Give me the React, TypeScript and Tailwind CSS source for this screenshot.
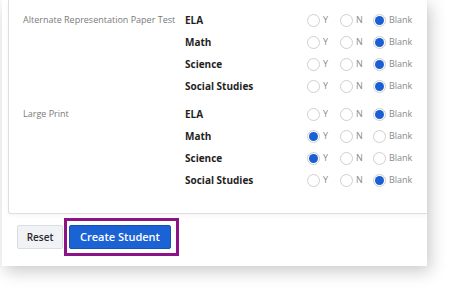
import React from 'react';

type Choice = 'Y' | 'N' | 'Blank';

const groups: { label: string; rows: { subject: string; value: Choice }[] }[] = [
  {
    label: 'Alternate Representation Paper Test',
    rows: [
      { subject: 'ELA', value: 'Blank' },
      { subject: 'Math', value: 'Blank' },
      { subject: 'Science', value: 'Blank' },
      { subject: 'Social Studies', value: 'Blank' },
    ],
  },
  {
    label: 'Large Print',
    rows: [
      { subject: 'ELA', value: 'Blank' },
      { subject: 'Math', value: 'Y' },
      { subject: 'Science', value: 'Y' },
      { subject: 'Social Studies', value: 'Blank' },
    ],
  },
];

function Radio({ label, checked, width }: { label: string; checked: boolean; width: string }) {
  return (
    <div className={`flex items-center ${width}`}>
      <span className="flex h-[13px] w-[13px] items-center justify-center rounded-full border border-[#cfcfcf] bg-white">
        {checked && <span className="h-[9px] w-[9px] rounded-full bg-[#1a5fd3]" />}
      </span>
      <span className="ml-[3px] text-[9px] text-[#8a8a8a]">{label}</span>
    </div>
  );
}

export default function App() {
  return (
    <div className="h-[289px] w-[450px] overflow-hidden bg-white font-['Open_Sans',sans-serif]">
      <div className="ml-[2px] h-[266px] w-[425px] bg-white shadow-[3px_5px_16px_rgba(0,0,0,0.22)]">
        {/* settings card */}
        <div className="ml-[6px] flex h-[214px] flex-col gap-[6px] rounded-bl-[3px] border-b border-l border-[#dedede] pl-[14px] pt-[9px] shadow-[0_2px_4px_rgba(0,0,0,0.04)]">
          {groups.map((g) => (
            <div key={g.label} className="flex">
              <div className="w-[162px] whitespace-nowrap pt-[4px] text-[9px] leading-[13px] text-[#7a7a7a]">{g.label}</div>
              <div className="flex flex-col">
                {g.rows.map((r) => (
                  <div key={r.subject} className="flex h-[22px] items-center">
                    <div className="w-[122px] text-[10px] font-bold text-[#1f1f1f]">{r.subject}</div>
                    <Radio label="Y" checked={r.value === 'Y'} width="w-[33px]" />
                    <Radio label="N" checked={r.value === 'N'} width="w-[33px]" />
                    <Radio label="Blank" checked={r.value === 'Blank'} width="w-[45px]" />
                  </div>
                ))}
              </div>
            </div>
          ))}
        </div>

        {/* actions */}
        <div className="mt-[4px] flex items-center gap-[1px] pl-[15px]">
          <button
            type="button"
            className="h-[24px] w-[46px] rounded-[2px] border border-[#dcdde3] bg-[#f1f2f6] text-[10px] font-semibold text-[#2a2a2a]"
          >
            Reset
          </button>
          <div className="border-[3px] border-[#8c1386] py-[4px] pl-[2px] pr-[5px]">
            <button
              type="button"
              className="flex h-[24px] w-[102px] items-center justify-center rounded-[2px] border border-[#1553b8] bg-[#1b62d4] text-[11px] font-semibold text-white"
            >
              Create Student
            </button>
          </div>
        </div>
      </div>
    </div>
  );
}
